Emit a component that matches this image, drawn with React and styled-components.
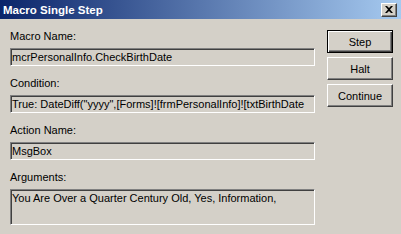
import React from "react";
import styled, { createGlobalStyle } from "styled-components";

const GlobalStyle = createGlobalStyle`
  html, body {
    margin: 0;
    padding: 0;
    background: #d4d0c8;
  }
`;

const Dialog = styled.div`
  width: 401px;
  height: 234px;
  background: #d4d0c8;
  font-family: "Liberation Sans", Arial, sans-serif;
  font-size: 11px;
  color: #000;
  overflow: hidden;
`;

const TitleBar = styled.div`
  height: 19px;
  display: flex;
  align-items: center;
  justify-content: space-between;
  padding: 0 3px 0 3px;
  background: linear-gradient(to right, #0a246a, #a6caf0);
`;

const Title = styled.span`
  color: #fff;
  font-weight: bold;
  font-size: 11.5px;
`;

const CloseButton = styled.div`
  width: 14px;
  height: 12px;
  display: flex;
  align-items: center;
  justify-content: center;
  background: #d4d0c8;
  border-top: 1px solid #fff;
  border-left: 1px solid #fff;
  border-right: 1px solid #404040;
  border-bottom: 1px solid #404040;
  box-shadow: inset -1px -1px 0 #808080;
  margin-right: 1px;
`;

const Body = styled.div`
  display: flex;
  padding: 11px 0 0 10px;
`;

const Fields = styled.div`
  width: 305px;
  display: flex;
  flex-direction: column;
  gap: 11px;
`;

const Group = styled.div`
  display: flex;
  flex-direction: column;
  gap: 5px;
`;

const Label = styled.div`
  line-height: 13px;
  height: 13px;
`;

const Box = styled.div`
  box-sizing: border-box;
  height: ${(p) => p.$h || 18}px;
  padding: ${(p) => (p.$multi ? "2px 1px" : "0 1px")};
  display: flex;
  align-items: ${(p) => (p.$multi ? "flex-start" : "center")};
  white-space: nowrap;
  overflow: hidden;
  border-top: 1px solid #808080;
  border-left: 1px solid #808080;
  border-right: 1px solid #fff;
  border-bottom: 1px solid #fff;
  box-shadow: inset 1px 1px 0 #404040;
`;

const Buttons = styled.div`
  margin-left: 12px;
  display: flex;
  flex-direction: column;
  gap: 4px;
`;

const Button = styled.div`
  box-sizing: border-box;
  width: 66px;
  height: 23px;
  display: flex;
  align-items: center;
  justify-content: center;
  background: #d4d0c8;
  border-top: 1px solid ${(p) => (p.$default ? "#000" : "#fff")};
  border-left: 1px solid ${(p) => (p.$default ? "#000" : "#fff")};
  border-right: 1px solid ${(p) => (p.$default ? "#000" : "#404040")};
  border-bottom: 1px solid ${(p) => (p.$default ? "#000" : "#404040")};
  box-shadow: ${(p) =>
    p.$default
      ? "inset 1px 1px 0 #fff, inset -1px -1px 0 #404040, inset -2px -2px 0 #808080"
      : "inset -1px -1px 0 #808080"};
`;

const fields = [
  { label: "Macro Name:", value: "mcrPersonalInfo.CheckBirthDate" },
  {
    label: "Condition:",
    value: 'True: DateDiff("yyyy",[Forms]![frmPersonalInfo]![txtBirthDate',
  },
  { label: "Action Name:", value: "MsgBox" },
  {
    label: "Arguments:",
    value: "You Are Over a Quarter Century Old, Yes, Information,",
    multi: true,
    h: 36,
  },
];

const App = () => (
  <>
    <GlobalStyle />
    <Dialog>
      <TitleBar>
        <Title>Macro Single Step</Title>
        <CloseButton>
          <svg width="8" height="7" viewBox="0 0 8 7">
            <path d="M0 0h2l2 2 2-2h2L5 3.5 8 7H6L4 5 2 7H0l3-3.5z" fill="#000" />
          </svg>
        </CloseButton>
      </TitleBar>
      <Body>
        <Fields>
          {fields.map((f) => (
            <Group key={f.label}>
              <Label>{f.label}</Label>
              <Box $multi={f.multi} $h={f.h}>
                {f.value}
              </Box>
            </Group>
          ))}
        </Fields>
        <Buttons>
          <Button $default>Step</Button>
          <Button>Halt</Button>
          <Button>Continue</Button>
        </Buttons>
      </Body>
    </Dialog>
  </>
);

export default App;
